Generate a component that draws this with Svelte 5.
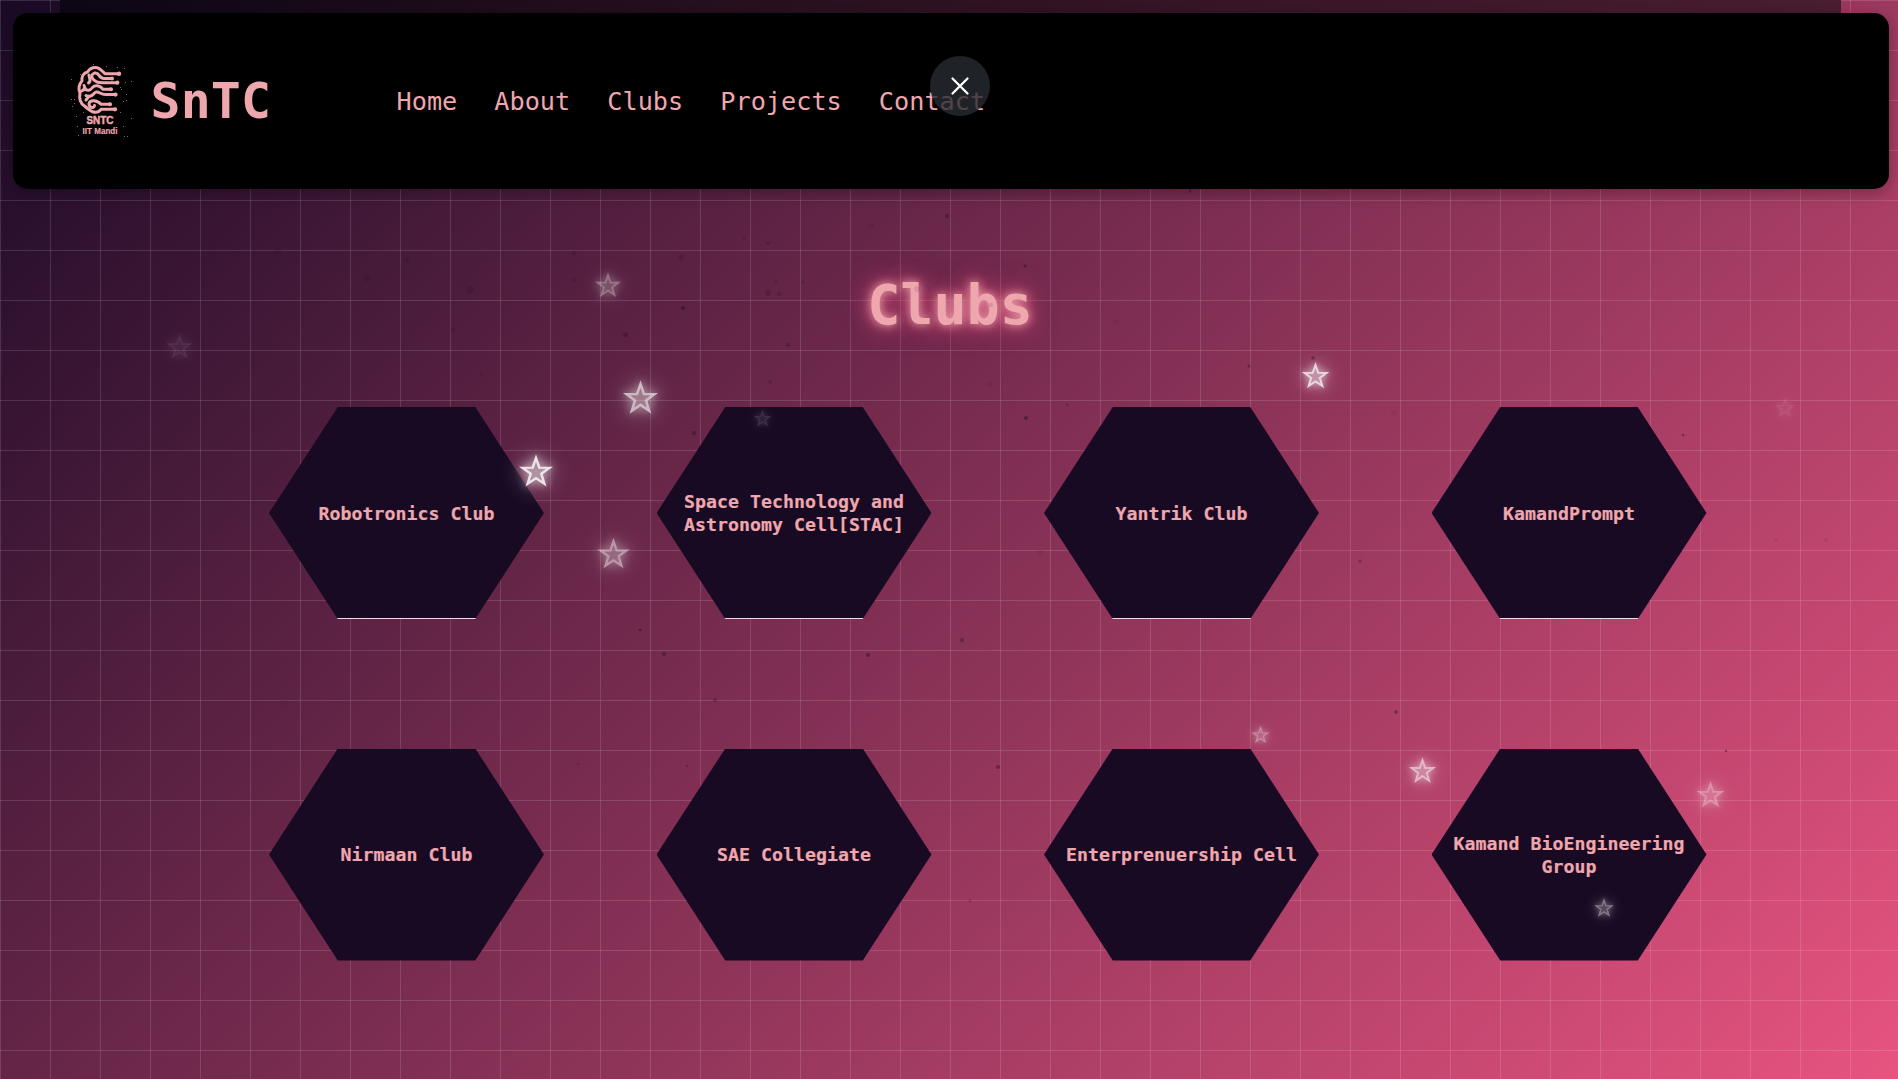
<script>
  const links = ['Home', 'About', 'Clubs', 'Projects', 'Contact'];
  const clubs = [
    'Robotronics Club',
    'Space Technology and Astronomy Cell[STAC]',
    'Yantrik Club',
    'KamandPrompt',
    'Nirmaan Club',
    'SAE Collegiate',
    'Enterprenuership Cell',
    'Kamand BioEngineering Group'
  ];
  // x, y, size, opacity
  const stars = [
    [608, 285.5, 22.5, 0.38], [179.5, 347, 22.5, 0.1], [640.5, 398, 30.5, 0.68], [536, 471.5, 29.5, 0.88],
    [613.5, 554, 28, 0.52], [762.5, 418.5, 15, 0.15], [1315.5, 376, 24, 0.8], [1785, 408, 17, 0.1],
    [1260.5, 735, 15.5, 0.4], [1422.5, 771, 23.5, 0.63], [1710.5, 795, 24, 0.4], [1604, 908, 17, 0.45]
  ];
  // x, y, radius, opacity
  const specks = [
    [367, 278, 3.2, 0.18], [470, 290, 3.5, 0.18], [574, 253, 2.5, 0.16], [574, 280, 2.5, 0.16],
    [681, 257, 2.6, 0.2], [768, 243, 2, 0.2], [768, 293, 3, 0.2], [779, 294, 2.3, 0.2],
    [683, 308, 2.1, 0.45], [625.5, 335, 2.5, 0.3], [453, 330, 2.5, 0.12], [788, 345, 2.3, 0.25],
    [770, 382, 1.7, 0.25], [694, 433, 2.2, 0.3], [947, 216, 2, 0.4], [1025, 266, 1.5, 0.45],
    [1190, 191, 1.5, 0.4], [1313, 358, 1.8, 0.45], [1249, 366, 1.5, 0.35], [1026, 418, 2, 0.45],
    [1067, 405, 1.4, 0.25], [990, 384, 3, 0.08], [1360, 561, 1.5, 0.35], [1394, 413, 3, 0.06],
    [962, 640, 2, 0.35], [868, 655, 2, 0.45], [640, 630, 1.3, 0.45], [664, 654, 2, 0.35],
    [715, 700, 2, 0.28], [1396, 712, 1.7, 0.45], [998, 767, 2, 0.4], [687, 766, 1.2, 0.25],
    [578, 764, 1.4, 0.2], [970, 901, 1.4, 0.25], [1683, 435, 1.3, 0.4], [1776, 540, 2, 0.08],
    [1826, 540, 2, 0.1], [1726, 751, 1.2, 0.4], [1040, 553, 3, 0.08], [278, 251, 3, 0.14],
    [407, 260, 2.2, 0.16], [283, 705, 5, 0.04], [871, 226, 3, 0.1], [1116, 322, 3, 0.06],
    [481, 374, 1.6, 0.16], [744, 238, 1.6, 0.2], [776, 282, 1.6, 0.2], [803, 282, 1.4, 0.2],
    [917, 289, 3, 0.1], [991, 305, 2.2, 0.12]
  ];
</script>

<div class="page">
  <div class="strip"></div>
  <header>
    <svg class="logo" viewBox="0 0 66 76" role="img" aria-label="SNTC IIT Mandi">
      <g fill="none" stroke="#efa7ae" stroke-width="3" stroke-linecap="round" stroke-linejoin="round">
        <path d="M49 10.7H35C32 8 30 4.5 25.5 4.5C21 4.5 19 6.5 17.5 9C13 10 11.5 14 12 18C9 21 8 26 10 30C9 35 10 40 14.5 43C18 46 20 47.5 22 48.5C26 50 29 49 31 46.3H45" />
        <path d="M42 15.5H34C28 15.5 30 9 24.5 10C20 12 21 16 27 19C29 19.7 30 19.7 33 19.7H47" />
        <path d="M19 12C19 16 22 17 18.5 20" />
        <path d="M41 26.3H33C30 22.5 25 21.5 22.5 24.5C20 28 17 28 14 25.5M14 22.5L15.5 26L11.5 28" />
        <path d="M45.7 31.6H36C30 32 29 27.5 25 29.5C22 33 19 35 16 32.5M16 37L19 33" />
        <path d="M40 41.3H31C27 37 20 36.5 19 40.5C19 45 24 46 24.5 42.5" />
      </g>
      <g fill="#efa7ae">
        <circle cx="49" cy="10.7" r="2.2" /><circle cx="47.3" cy="19.7" r="2.1" /><circle cx="42" cy="15.5" r="1.9" />
        <circle cx="41" cy="26.3" r="2" /><circle cx="45.5" cy="31.6" r="2.1" /><circle cx="40" cy="41.3" r="2" /><circle cx="45" cy="46.3" r="2.1" />
      </g>
      <path
        fill="#8d5f64"
        d="M23 1h1v1h-1zM36 3h1v1h-1zM47 4h1v1h-1zM54 5h1v1h-1zM10 11h1v1h-1zM1 16h1v1h-1zM61 18h1v1h-1zM55 19h1v1h-1zM50 24h1v1h-1zM51 26h1v1h-1zM56 31h1v1h-1zM1 36h1v1h-1zM4 36h1v1h-1zM4 40h1v1h-1zM2 43h1v1h-1zM53 38h1v1h-1zM56 37h1v1h-1zM6 53h1v1h-1zM61 55h1v1h-1zM53 63h1v1h-1zM7 63h1v1h-1zM8 72h1v1h-1zM54 73h1v1h-1zM57 73h1v1h-1zM13 49h1v1h-1zM50 49h1v1h-1z"
      />
      <text x="30" y="61" textLength="27" lengthAdjust="spacingAndGlyphs" font-size="10.8" stroke-width="0.5">SNTC</text>
      <text x="30" y="70.8" textLength="35" lengthAdjust="spacingAndGlyphs" font-size="8.6" stroke-width="0.15">IIT Mandi</text>
    </svg>
    <span class="brand">SnTC</span>
    <nav>
      {#each links as link}<a href="#{link}">{link}</a>{/each}
    </nav>
  </header>

  <main>
    <h1>Clubs</h1>
    <section class="grid">
      {#each clubs as club, i}
        <article class="club" class:lined={i < 4}><div class="hex">{club}</div></article>
      {/each}
    </section>
  </main>

  <svg class="sky" viewBox="0 0 1898 1079" aria-hidden="true">
    {#each specks as [x, y, r, o]}
      <circle cx={x} cy={y} {r} fill="#230a28" opacity={o} />
    {/each}
    {#each stars as [x, y, s, o]}
      <g class="star" transform="translate({x} {y}) scale({s / 32})" opacity={o}>
        <path d="M0-14.5L3.6-4.2L14.5-4L5.8 2.5L9 13.2L0 7.2L-9 13.2L-5.8 2.5L-14.5-4L-3.6-4.2Z" />
      </g>
    {/each}
  </svg>

  <button class="close" aria-label="Close">
    <svg viewBox="0 0 20 20"><path d="M2.5 2.5L17.5 17.5M17.5 2.5L2.5 17.5" /></svg>
  </button>
</div>

<style>
  :global(body) {
    margin: 0;
    overflow: hidden;
  }
  .page {
    position: relative;
    box-sizing: border-box;
    width: 1898px;
    height: 1079px;
    padding: 13px 9px 0 13px;
    overflow: hidden;
    font-family: 'DejaVu Sans Mono', monospace;
    color: #efa7ae;
    background:
      linear-gradient(rgba(255, 255, 255, 0.13) 1px, transparent 1px) 0 0 / 50px 50px,
      linear-gradient(90deg, rgba(255, 255, 255, 0.13) 1px, transparent 1px) 0 0 / 50px 50px,
      linear-gradient(135deg, #1a0a26, #e75480);
  }
  .strip {
    position: absolute;
    top: 0;
    left: 60px;
    width: 1781px;
    height: 60px;
    background: linear-gradient(90deg, #0d0716, #230e1d 30%, #4b1d31);
  }
  header {
    position: relative;
    display: flex;
    align-items: center;
    box-sizing: border-box;
    height: 176px;
    padding-left: 57px;
    border-radius: 15px;
    background: #000;
    box-shadow: 0 4px 15px rgba(0, 0, 0, 0.3);
  }
  .logo {
    width: 66px;
    height: 76px;
  }
  .logo text {
    font-family: 'Liberation Sans', sans-serif;
    font-weight: 700;
    fill: #efa7ae;
    stroke: #efa7ae;
    text-anchor: middle;
  }
  .brand {
    margin-left: 14.5px;
    width: 246px;
    font-size: 49.8px;
    font-weight: 700;
    letter-spacing: 0.2px;
  }
  nav {
    display: flex;
    gap: 37px;
    font-size: 25.2px;
  }
  a {
    color: inherit;
    text-decoration: none;
    letter-spacing: 0.03px;
  }
  h1 {
    margin: 80px 0 0;
    height: 72px;
    line-height: 72px;
    text-align: center;
    font-size: 55px;
    letter-spacing: 0;
    text-indent: -2px;
    text-shadow: 0 0 10px #efa7ae, 0 0 20px #e75480, 0 0 30px rgba(231, 84, 128, 0.5);
  }
  .grid {
    display: grid;
    grid-template-columns: repeat(4, 275px);
    gap: 129.5px 112.5px;
    margin: 66px 0 0 256px;
  }
  .club {
    height: 212px;
    background: #190a24;
    clip-path: polygon(25% 0, 75% 0, 100% 50%, 75% 100%, 25% 100%, 0 50%);
  }
  .hex {
    display: flex;
    align-items: center;
    justify-content: center;
    height: 212px;
    text-align: center;
    font-size: 18.2px;
    font-weight: 700;
    line-height: 23px;
    letter-spacing: 0.04px;
    -webkit-text-stroke: 0.2px #efa7ae;
  }
  .lined {
    background: linear-gradient(#190a24 211px, #f3dbe6 211px);
  }
  .sky {
    position: absolute;
    inset: 0;
    width: 1898px;
    height: 1079px;
    pointer-events: none;
  }
  .star {
    filter: drop-shadow(0 0 5px #fff) drop-shadow(0 0 12px rgba(255, 255, 255, 0.6));
  }
  .star path {
    fill: rgba(255, 255, 255, 0.12);
    stroke: #fff;
    stroke-width: 2.7;
  }
  .close {
    position: absolute;
    left: 930px;
    top: 56px;
    display: grid;
    place-items: center;
    width: 60px;
    height: 60px;
    padding: 0;
    border: 0;
    border-radius: 50%;
    background: rgba(39, 43, 48, 0.8);
  }
  .close svg {
    width: 20px;
    height: 20px;
    stroke: #fff;
    stroke-width: 2.3;
    stroke-linecap: round;
  }
</style>
